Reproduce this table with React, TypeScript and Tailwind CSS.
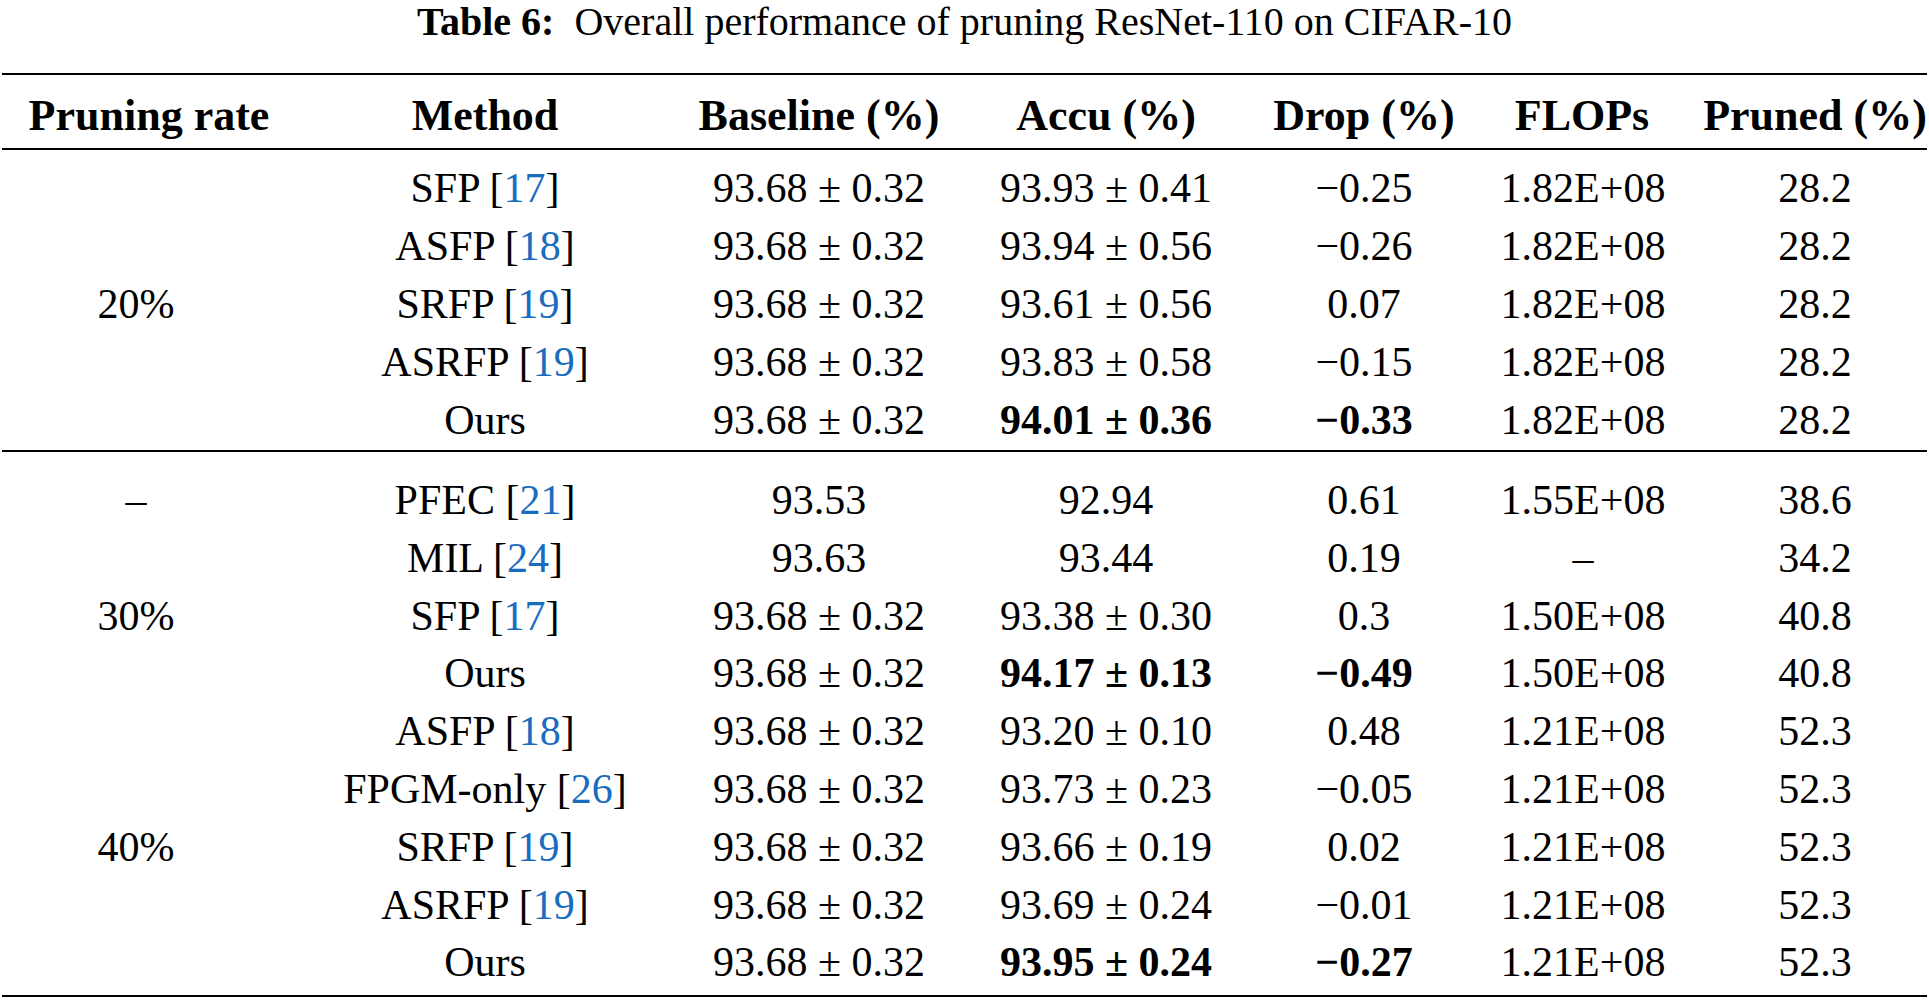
type Row = {
  rate?: string;
  method: string;
  ref: string;
  baseline: string;
  accu: string;
  drop: string;
  flops: string;
  pruned: string;
  best?: boolean;
};

const sectionA: Row[] = [
  { method: 'SFP', ref: '17', baseline: '93.68 ± 0.32', accu: '93.93 ± 0.41', drop: '−0.25', flops: '1.82E+08', pruned: '28.2' },
  { method: 'ASFP', ref: '18', baseline: '93.68 ± 0.32', accu: '93.94 ± 0.56', drop: '−0.26', flops: '1.82E+08', pruned: '28.2' },
  { rate: '20%', method: 'SRFP', ref: '19', baseline: '93.68 ± 0.32', accu: '93.61 ± 0.56', drop: '0.07', flops: '1.82E+08', pruned: '28.2' },
  { method: 'ASRFP', ref: '19', baseline: '93.68 ± 0.32', accu: '93.83 ± 0.58', drop: '−0.15', flops: '1.82E+08', pruned: '28.2' },
  { method: 'Ours', ref: '', baseline: '93.68 ± 0.32', accu: '94.01 ± 0.36', drop: '−0.33', flops: '1.82E+08', pruned: '28.2', best: true },
];

const sectionB: Row[] = [
  { rate: '–', method: 'PFEC', ref: '21', baseline: '93.53', accu: '92.94', drop: '0.61', flops: '1.55E+08', pruned: '38.6' },
  { method: 'MIL', ref: '24', baseline: '93.63', accu: '93.44', drop: '0.19', flops: '–', pruned: '34.2' },
  { rate: '30%', method: 'SFP', ref: '17', baseline: '93.68 ± 0.32', accu: '93.38 ± 0.30', drop: '0.3', flops: '1.50E+08', pruned: '40.8' },
  { method: 'Ours', ref: '', baseline: '93.68 ± 0.32', accu: '94.17 ± 0.13', drop: '−0.49', flops: '1.50E+08', pruned: '40.8', best: true },
  { method: 'ASFP', ref: '18', baseline: '93.68 ± 0.32', accu: '93.20 ± 0.10', drop: '0.48', flops: '1.21E+08', pruned: '52.3' },
  { method: 'FPGM-only', ref: '26', baseline: '93.68 ± 0.32', accu: '93.73 ± 0.23', drop: '−0.05', flops: '1.21E+08', pruned: '52.3' },
  { rate: '40%', method: 'SRFP', ref: '19', baseline: '93.68 ± 0.32', accu: '93.66 ± 0.19', drop: '0.02', flops: '1.21E+08', pruned: '52.3' },
  { method: 'ASRFP', ref: '19', baseline: '93.68 ± 0.32', accu: '93.69 ± 0.24', drop: '−0.01', flops: '1.21E+08', pruned: '52.3' },
  { method: 'Ours', ref: '', baseline: '93.68 ± 0.32', accu: '93.95 ± 0.24', drop: '−0.27', flops: '1.21E+08', pruned: '52.3', best: true },
];

const cols = 'grid grid-cols-[298px_374px_294px_280px_236px_200px_1fr]';

function DataRow({ row, tall }: { row: Row; tall?: boolean }) {
  return (
    <div className={`${cols} ${tall ? 'h-[57.8px] leading-[57.8px]' : 'h-[58px] leading-[58px]'} text-[42px] text-center whitespace-nowrap`}>
      <div className="pr-[26px]">{row.rate ?? ''}</div>
      <div>
        {row.method}
        {row.ref && (
          <>
            {' '}[<span className="text-[#1a6cbf]">{row.ref}</span>]
          </>
        )}
      </div>
      <div>{row.baseline}</div>
      <div className={row.best ? 'font-bold' : ''}>{row.accu}</div>
      <div className={row.best ? 'font-bold' : ''}>{row.drop}</div>
      <div className="pl-[2px]">{row.flops}</div>
      <div className="pl-[19px]">{row.pruned}</div>
    </div>
  );
}

export default function App() {
  return (
    <div className="w-[1929px] h-[1002px] bg-white text-black font-['Liberation_Serif','Times_New_Roman',serif] overflow-hidden">
      <div className="h-[44px] leading-[44px] text-[40px] text-center whitespace-nowrap">
        <span className="font-bold">Table 6:</span>
        {'\u00a0 '}Overall performance of pruning ResNet-110 on CIFAR-10
      </div>

      <div className="mt-[29px] mx-[2px] h-[2px] bg-black" />

      <div className={`${cols} h-[73px] pt-[8px] leading-[65px] text-[44px] font-bold text-center whitespace-nowrap`}>
        <div>Pruning rate</div>
        <div>Method</div>
        <div>Baseline (%)</div>
        <div>Accu (%)</div>
        <div>Drop (%)</div>
        <div>FLOPs</div>
        <div className="pl-[19px]">Pruned (%)</div>
      </div>

      <div className="mx-[2px] h-[2px] bg-black" />

      <div className="pt-[9px]">
        {sectionA.map((r, i) => (
          <DataRow key={i} row={r} />
        ))}
      </div>

      <div className="mt-[1px] mx-[2px] h-[2px] bg-black" />

      <div className="pt-[20px]">
        {sectionB.map((r, i) => (
          <DataRow key={i} row={r} tall />
        ))}
      </div>

      <div className="mt-[3px] mx-[2px] h-[2px] bg-black" />
    </div>
  );
}
